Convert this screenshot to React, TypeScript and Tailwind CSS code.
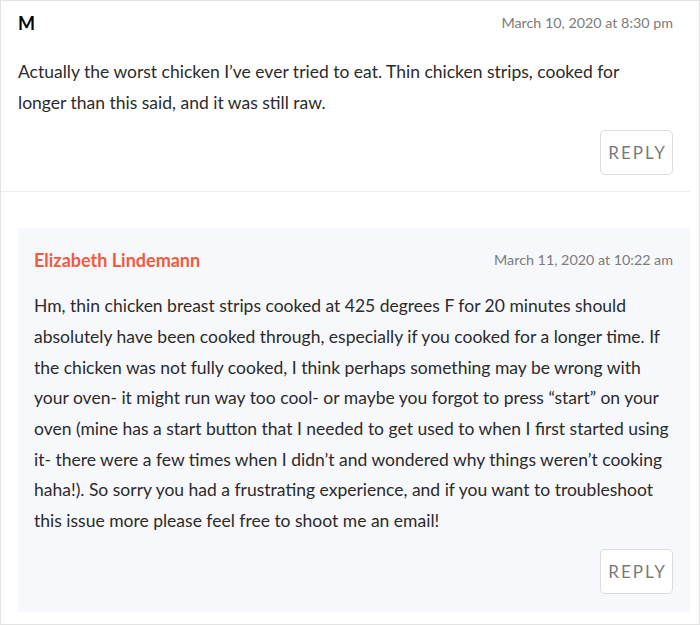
const font = { fontFamily: "Lato, 'Open Sans', sans-serif" };

function ReplyButton() {
  return (
    <button className="h-[45px] w-[73px] rounded-[5px] border border-[#dcdcdc] bg-white text-[17px] tracking-[0.12em] text-[#7a7a7a] pl-[2px]">
      REPLY
    </button>
  );
}

export default function App() {
  return (
    <div className="w-[700px] h-[626px] bg-white" style={font}>
      <div className="h-[625px] border border-[#e2e2e2] pr-[9px]">
        <div className="border-b border-[#eeeeee] px-[17px] pt-[12px] pb-[16px]">
          <div className="flex items-center justify-between h-[20px]">
            <span className="text-[18px] font-bold text-black">M</span>
            <span className="text-[14.3px] text-[#7b7b7b]">March 10, 2020 at 8:30 pm</span>
          </div>
          <p className="mt-[24px] pr-[6px] text-[17.5px] leading-[30.6px] text-[#2b2b2b]">
            Actually the worst chicken I’ve ever tried to eat. Thin chicken strips, cooked for longer than this said, and it was still raw.
          </p>
          <div className="mt-[12px] flex justify-end">
            <ReplyButton />
          </div>
        </div>

        <div className="ml-[17px] mt-[36px] bg-[#f7f8fb] pl-[16px] pr-[17px] pt-[22px] pb-[18px]">
          <div className="flex items-center justify-between h-[20px]">
            <span className="text-[18px] font-bold text-[#f25a3e]">Elizabeth Lindemann</span>
            <span className="text-[14.3px] text-[#7b7b7b]">March 11, 2020 at 10:22 am</span>
          </div>
          <p className="mt-[21px] text-[17.5px] leading-[30.7px] text-[#2b2b2b]">
            Hm, thin chicken breast strips cooked at 425 degrees F for 20 minutes should absolutely have been cooked through, especially if you cooked for a longer time. If the chicken was not fully cooked, I think perhaps something may be wrong with your oven- it might run way too cool- or maybe you forgot to press “start” on your oven (mine has a start button that I needed to get used to when I first started using it- there were a few times when I didn’t and wondered why things weren’t cooking haha!). So sorry you had a frustrating experience, and if you want to troubleshoot this issue more please feel free to shoot me an email!
          </p>
          <div className="mt-[12px] flex justify-end">
            <ReplyButton />
          </div>
        </div>
      </div>
    </div>
  );
}
